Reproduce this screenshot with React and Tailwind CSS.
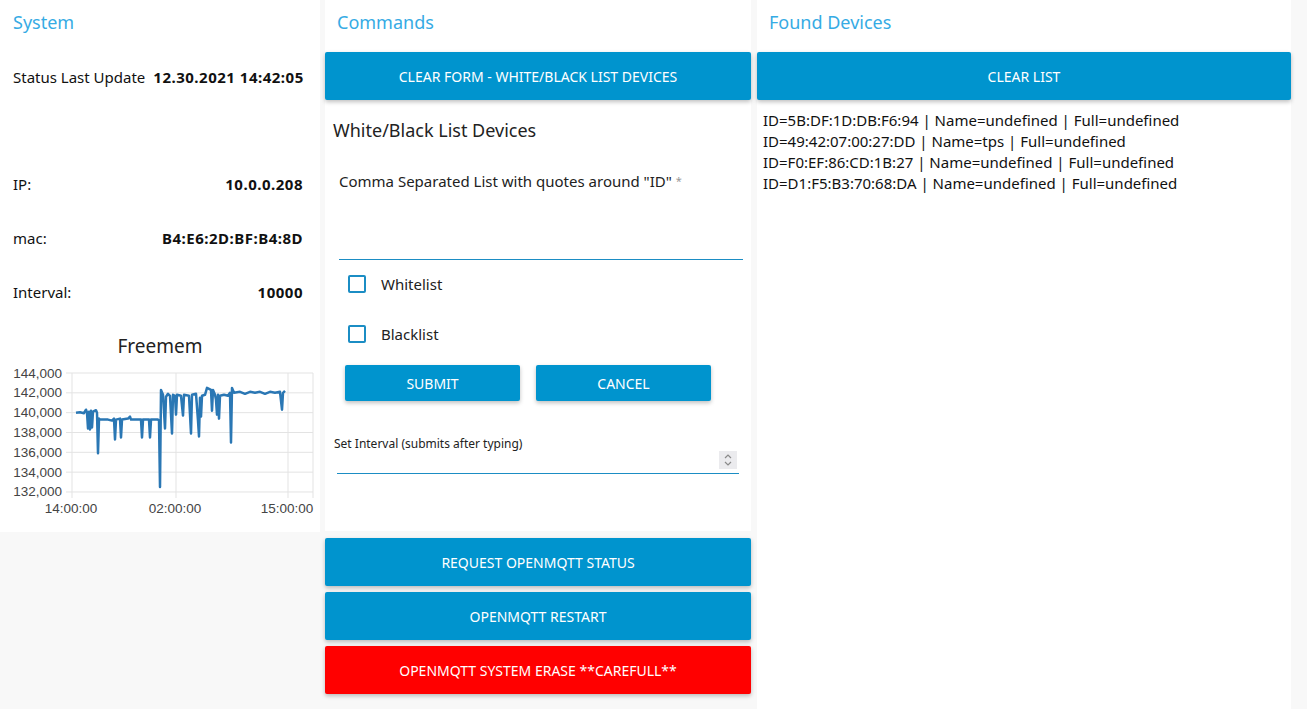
import React from "react";

const pts = [[76,140000],[80,140050],[84,139950],[86,140300],[87,140000],[88,138400],[89,140100],[90,138300],[91,140200],[92,138500],[93,140100],[95,140200],[96,140250],[97,140000],[98,135900],[99,139400],[100,139300],[108,139300],[112,139200],[114,139400],[115,137300],[116,139300],[120,139400],[121,137500],[122,139300],[128,139400],[130,139600],[131,139300],[141,139300],[142,137500],[143,139300],[149,139300],[150,137500],[151,139300],[158,139300],[159,139200],[160,132500],[161,142300],[163,141800],[165,138400],[166,141600],[168,141900],[170,141700],[172,137900],[173,141800],[175,141700],[176,139800],[177,141800],[181,141700],[183,139700],[184,141800],[189,141700],[191,137900],[192,141800],[196,141900],[198,139200],[199,137600],[200,141500],[201,139600],[202,141700],[205,141800],[207,142500],[209,142400],[211,142300],[212,140200],[213,142300],[215,141800],[216,141300],[217,139800],[218,141800],[219,139400],[220,141700],[224,141800],[228,141700],[230,142000],[231,137000],[232,142500],[234,142000],[240,142100],[245,141900],[250,142100],[255,142000],[260,142100],[265,141900],[270,142100],[275,142000],[280,142100],[282,140300],[283,142000],[285,142200]];

const v2y = (v) => 134 - ((v - 132000) / 12000) * 119;

function Chart() {
  const ys = [0, 1, 2, 3, 4, 5, 6].map((i) => 15 + i * 19.83);
  const labels = ["144,000", "142,000", "140,000", "138,000", "136,000", "134,000", "132,000"];
  const xs = [72, 176, 288, 313];
  const line = pts.map(([x, v]) => `${x},${v2y(v).toFixed(1)}`).join(" ");
  return (
    <svg width="320" height="160" className="block">
      {ys.map((y, i) => (
        <line key={"h" + i} x1="66" x2="313" y1={y} y2={y} stroke="#e3e3e3" strokeWidth="1" />
      ))}
      {xs.map((x, i) => (
        <line key={"v" + i} x1={x} x2={x} y1="15" y2="140" stroke="#e3e3e3" strokeWidth="1" />
      ))}
      {ys.map((y, i) => (
        <text key={"t" + i} x="62" y={y + 4.5} textAnchor="end" fontSize="13.5" fill="#444" fontFamily="Liberation Sans, Arial, sans-serif">
          {labels[i]}
        </text>
      ))}
      {[["14:00:00", 71], ["02:00:00", 175], ["15:00:00", 287]].map(([t, x]) => (
        <text key={t} x={x} y="155" textAnchor="middle" fontSize="13.5" fill="#444" fontFamily="Liberation Sans, Arial, sans-serif">
          {t}
        </text>
      ))}
      <polyline points={line} fill="none" stroke="#2a77b4" strokeWidth="2.5" strokeLinejoin="round" />
    </svg>
  );
}

function Btn({ children, red }) {
  return (
    <div
      className={
        "h-[48px] rounded-[2px] flex items-center justify-center text-white text-[14px] uppercase shadow-[0_2px_4px_rgba(0,0,0,0.25)] " +
        (red ? "bg-[#ff0000]" : "bg-[#0094ce]")
      }
    >
      {children}
    </div>
  );
}

function Title({ children }) {
  return <div className="h-[45px] flex items-center text-[18px] text-[#36abe4]">{children}</div>;
}

function CheckRow({ label, extra }) {
  return (
    <div className={"h-[46px] flex items-center pl-[23px] " + (extra || "")}>
      <div className="w-[18px] h-[18px] border-2 border-[#1b8dc4] rounded-[2px]" />
      <span className="ml-[15px] text-[15px] text-[#222] pt-[1px]">{label}</span>
    </div>
  );
}

export default function App() {
  return (
    <div className="w-[1307px] h-[709px] bg-[#f8f8f8] flex font-['Noto_Sans',sans-serif] text-[#111] overflow-hidden">
      {/* System */}
      <div className="w-[320px] h-[532px] bg-white flex flex-col shrink-0">
        <div className="pl-[13px]">
          <Title>System</Title>
        </div>
        <div className="mt-[7px] h-[48px] flex items-center pl-[13px] pt-[2px] text-[15px]">
          <span>Status Last Update</span>
          <span className="ml-[8px] font-bold tracking-[0.5px]">12.30.2021 14:42:05</span>
        </div>
        <div className="mt-[6px] h-[48px]" />
        {[["IP:", "10.0.0.208"], ["mac:", "B4:E6:2D:BF:B4:8D"], ["Interval:", "10000"]].map(([l, v]) => (
          <div key={l} className="mt-[6px] h-[48px] flex items-center justify-between pl-[13px] pr-[17px] text-[15px]">
            <span>{l}</span>
            <span className="font-bold tracking-[0.5px]">{v}</span>
          </div>
        ))}
        <div className="mt-[6px] flex flex-col">
          <div className="pt-[12px] h-[36px] leading-[24px] text-center text-[19px] text-[#222]">Freemem</div>
          <Chart />
        </div>
      </div>

      {/* Commands */}
      <div className="ml-[5px] w-[426px] flex flex-col shrink-0">
        <div className="h-[531px] bg-white flex flex-col">
          <div className="pl-[12px]">
            <Title>Commands</Title>
          </div>
          <div className="mt-[7px]">
            <Btn>Clear form - White/Black List Devices</Btn>
          </div>
          <div className="mt-[18px] pl-[8px] h-[24px] leading-[24px] text-[18px] text-[#222]">White/Black List Devices</div>
          <div className="mt-[29px] ml-[14px] mr-[8px]">
            <div className="h-[20px] leading-[20px] text-[15px] text-[#222]">
              Comma Separated List with quotes around "ID" <span className="text-[11px] text-[#999] align-top">*</span>
            </div>
            <div className="h-[69px] border-b border-[#1b8dc4]" />
          </div>
          <CheckRow label="Whitelist" extra="pt-[1px]" />
          <CheckRow label="Blacklist" extra="mt-[4px] pt-[1px]" />
          <div className="mt-[9px] pl-[20px] flex gap-[16px]">
            {["Submit", "Cancel"].map((t) => (
              <div key={t} className="w-[175px] h-[36px] rounded-[2px] bg-[#0094ce] text-white text-[14px] uppercase flex items-center justify-center shadow-[0_2px_4px_rgba(0,0,0,0.25)]">
                {t}
              </div>
            ))}
          </div>
          <div className="mt-[36px] pl-[9px] h-[14px] leading-[14px] text-[12px] text-[#222]">Set Interval (submits after typing)</div>
          <div className="ml-[12px] mr-[12px] h-[23px] border-b border-[#1b8dc4] flex justify-end items-start pr-[2px]">
            <div className="w-[18px] h-[18px] bg-[#ebebee] flex items-center justify-center">
              <svg width="10" height="14" viewBox="0 0 10 14" fill="none" stroke="#8a8a8a" strokeWidth="1.2">
                <path d="M2 5 L5 2 L8 5" />
                <path d="M2 9 L5 12 L8 9" />
              </svg>
            </div>
          </div>
        </div>
        <div className="mt-[7px] flex flex-col gap-[6px]">
          <Btn>Request OpenMQTT Status</Btn>
          <Btn>OpenMQTT Restart</Btn>
          <Btn red>OpenMQTT System Erase **CAREFULL**</Btn>
        </div>
      </div>

      {/* Found Devices */}
      <div className="ml-[6px] w-[534px] h-full bg-white flex flex-col shrink-0">
        <div className="pl-[12px]">
          <Title>Found Devices</Title>
        </div>
        <div className="mt-[7px]">
          <Btn>Clear List</Btn>
        </div>
        <div className="mt-[10px] pl-[6px] text-[15px] leading-[21px] text-[#111]">
          <div>ID=5B:DF:1D:DB:F6:94 | Name=undefined | Full=undefined</div>
          <div>ID=49:42:07:00:27:DD | Name=tps | Full=undefined</div>
          <div>ID=F0:EF:86:CD:1B:27 | Name=undefined | Full=undefined</div>
          <div>ID=D1:F5:B3:70:68:DA | Name=undefined | Full=undefined</div>
        </div>
      </div>
    </div>
  );
}
